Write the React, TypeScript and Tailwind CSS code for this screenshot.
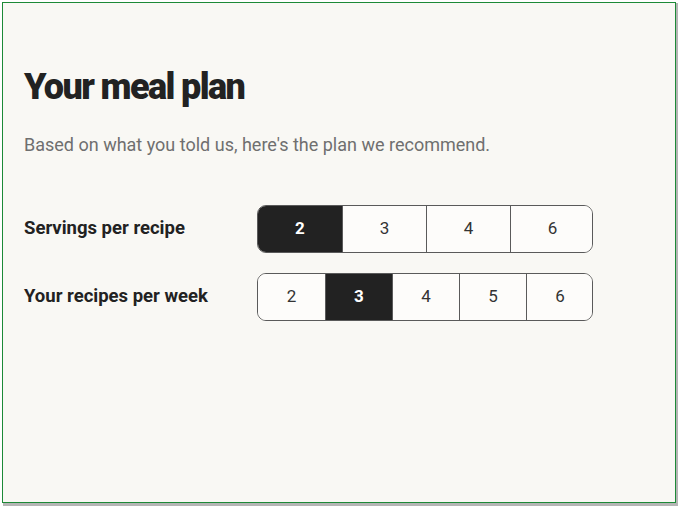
const servings = [2, 3, 4, 6]
const recipes = [2, 3, 4, 5, 6]

function Segmented({ options, selected, width }: { options: number[]; selected: number; width: number }) {
  return (
    <div className="flex h-[48px] w-[336px] overflow-hidden rounded-[9px] border border-[#5a5a5a]">
      {options.map((n, i) => {
        const active = n === selected
        return (
          <div
            key={n}
            style={{ width }}
            className={
              "flex shrink-0 items-center justify-center text-[17px] " +
              (i > 0 ? "border-l border-[#5a5a5a] " : "") +
              (active ? "bg-[#222222] font-bold text-white" : "bg-[#fdfcfa] text-[#333333]")
            }
          >
            {n}
          </div>
        )
      })}
    </div>
  )
}

export default function App() {
  return (
    <div className="h-[507px] w-[678px] bg-white p-[2px] font-['Roboto',sans-serif]">
      <div className="h-[501px] w-[674px] border border-[#1d8a37] bg-[#f9f8f4] pl-[21px] pt-[61px] shadow-[2px_2px_0_1px_#b5b5b5]">
        <h1 className="text-[36px] font-black leading-[46px] tracking-[-0.045em] text-[#222222]">Your meal plan</h1>
        <p className="mt-[22px] text-[18px] leading-[26px] text-[#6f6f6f]">
          Based on what you told us, here's the plan we recommend.
        </p>
        <div className="mt-[47px] flex items-center">
          <div className="w-[233px] text-[18.5px] font-bold text-[#222222]">Servings per recipe</div>
          <Segmented options={servings} selected={2} width={84} />
        </div>
        <div className="mt-[20px] flex items-center">
          <div className="w-[233px] text-[18.5px] font-bold text-[#222222]">Your recipes per week</div>
          <Segmented options={recipes} selected={3} width={67} />
        </div>
      </div>
    </div>
  )
}
